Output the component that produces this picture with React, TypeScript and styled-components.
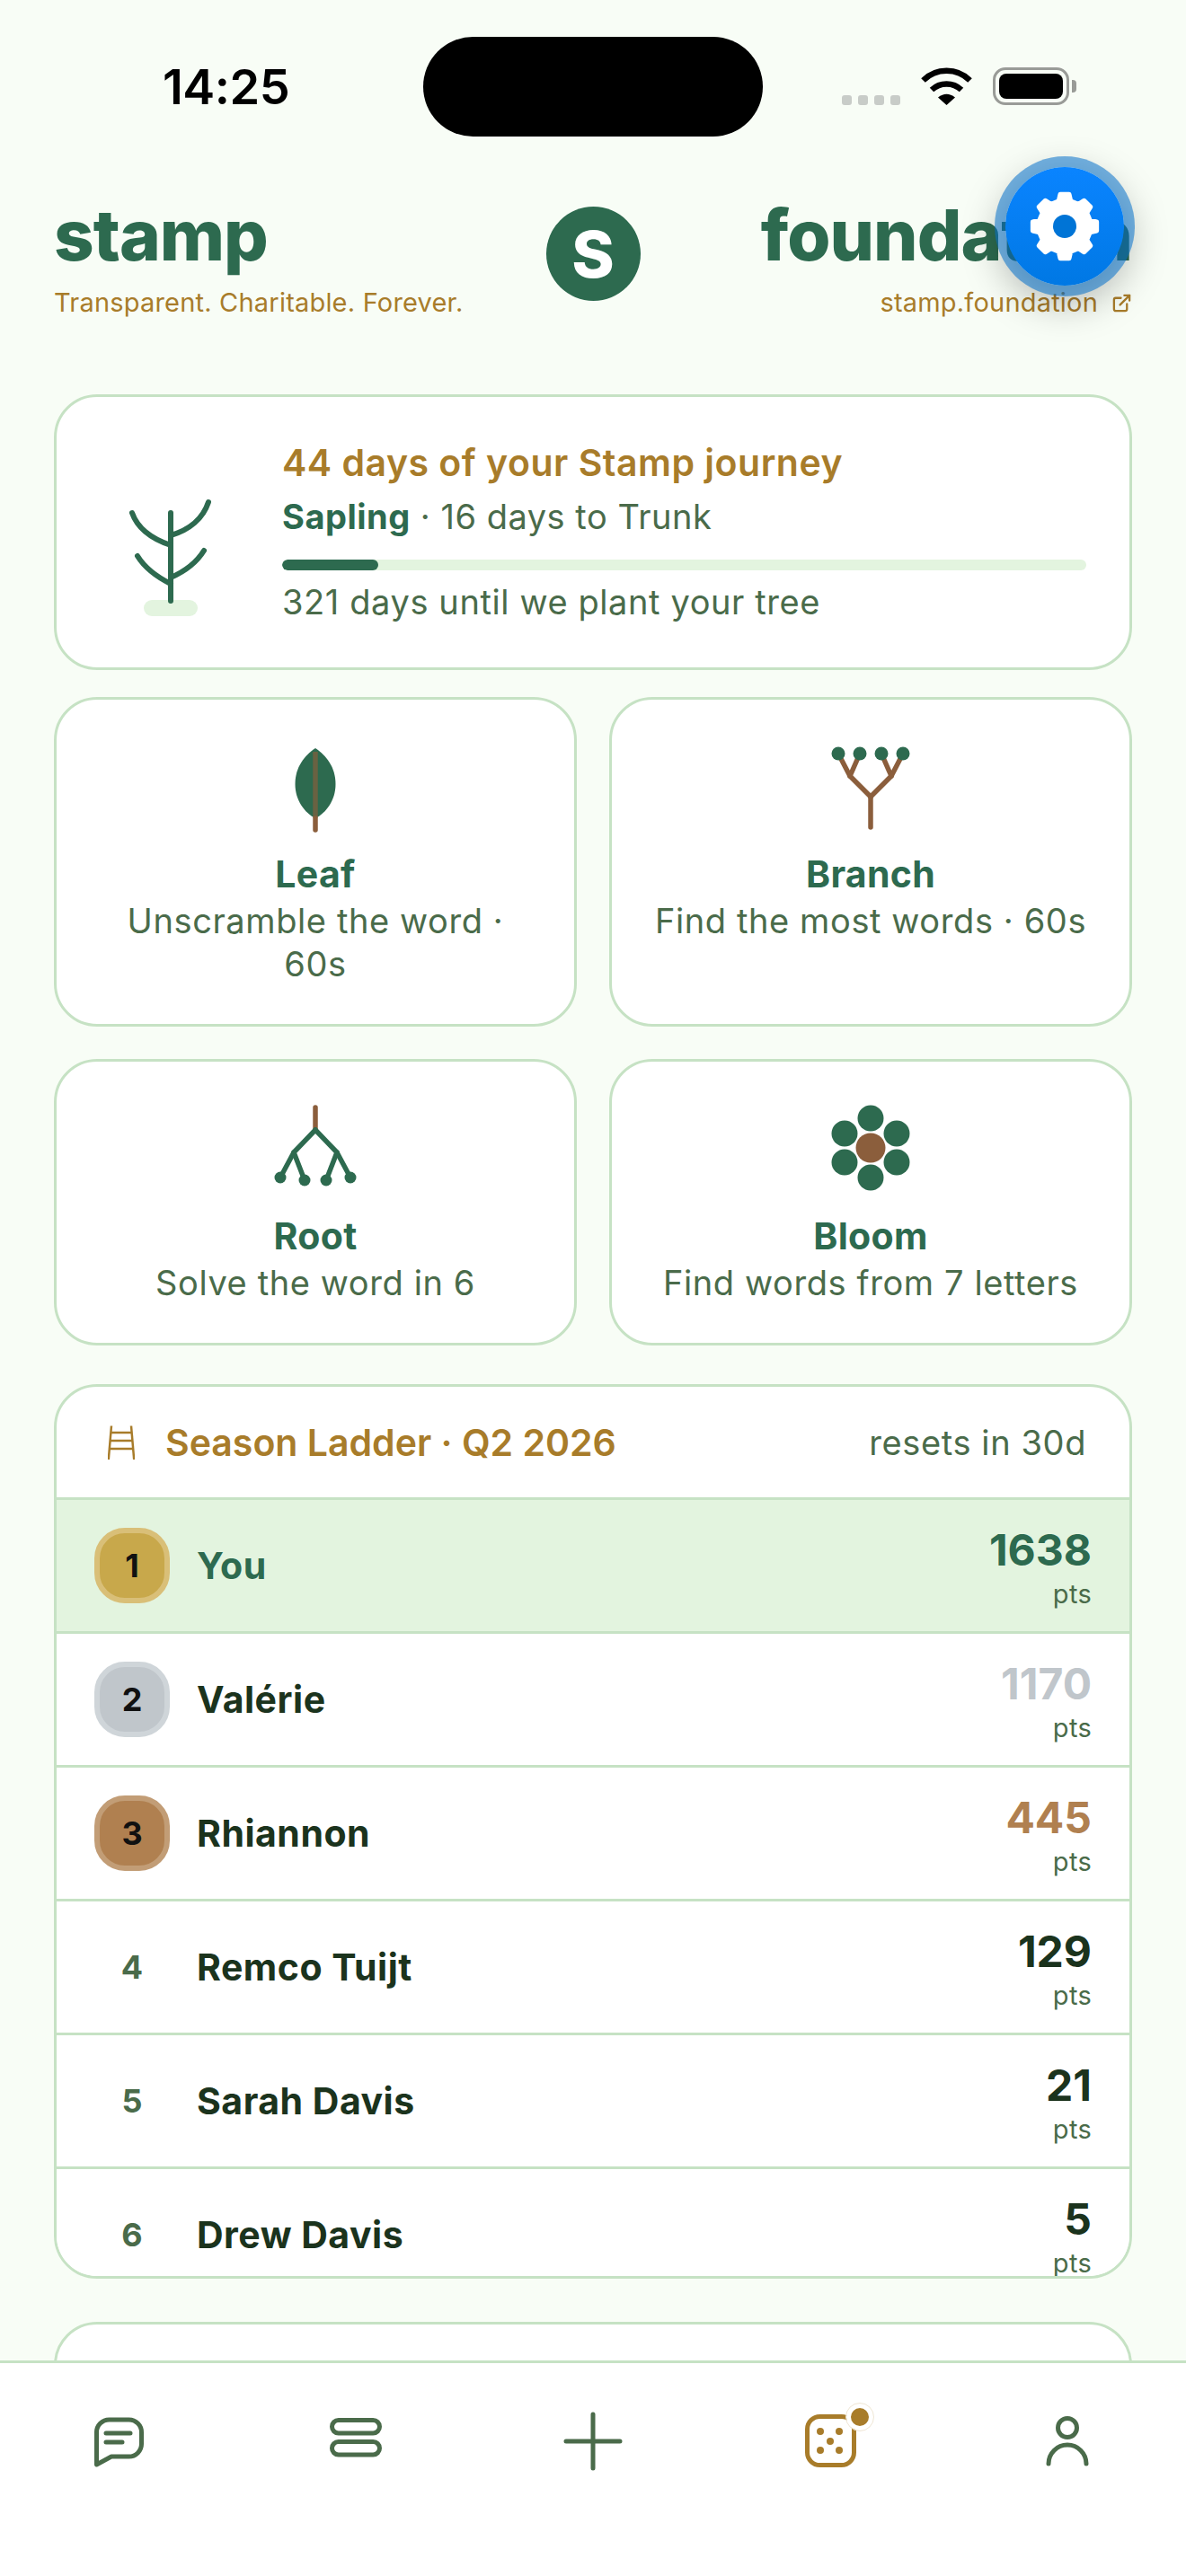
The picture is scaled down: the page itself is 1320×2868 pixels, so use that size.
import React from 'react';
import styled, {createGlobalStyle} from 'styled-components';
import {ExternalLink} from 'lucide-react';

const GREEN = '#2d6a4f';
const GOLD = '#a87c2a';
const MUTED = '#4a6b4a';
const INK = '#1b331d';
const LINE = '#c6e2c4';
const TINT = '#e3f4df';
const BROWN = '#8b5e3c';

type Rank = {
  rank: number;
  name: string;
  points: number;
};

const ranks: Rank[] = [
  {rank: 1, name: 'You', points: 1638},
  {rank: 2, name: 'Valérie', points: 1170},
  {rank: 3, name: 'Rhiannon', points: 445},
  {rank: 4, name: 'Remco Tuijt', points: 129},
  {rank: 5, name: 'Sarah Davis', points: 21},
  {rank: 6, name: 'Drew Davis', points: 5},
];

const medals: Record<number, {fill: string; ring: string}> = {
  1: {fill: '#c8a84b', ring: '#d9bf78'},
  2: {fill: '#c0c6cb', ring: '#cfd5d9'},
  3: {fill: '#b08050', ring: '#c29d76'},
};

const pointColors: Record<number, string> = {
  1: GREEN,
  2: '#c0c6cb',
  3: '#b08050',
};

function gearPoints() {
  const points: string[] = [];
  for (let i = 0; i < 8; i++) {
    const center = i * 45 - 90;
    [
      [29, -13.5],
      [36, -8],
      [36, 8],
      [29, 13.5],
    ].forEach(([radius, offset]) => {
      const angle = ((center + offset) * Math.PI) / 180;
      const x = 39 + radius * Math.cos(angle);
      const y = 39 + radius * Math.sin(angle);
      points.push(`${x.toFixed(2)},${y.toFixed(2)}`);
    });
  }
  return points.join(' ');
}

function TreeIcon() {
  return (
    <svg width="100" height="140" viewBox="140 550 100 140" fill="none">
      <rect x="159" y="665" width="60" height="18" rx="9" fill={TINT} />
      <g stroke={GREEN} strokeWidth="6" strokeLinecap="round">
        <path d="M189 568V666" />
        <path d="M146 568C152 585 168 597 189 604" />
        <path d="M231 556C225 574 210 587 189 593" />
        <path d="M152 616C160 629 173 639 189 647" />
        <path d="M226 610C218 623 205 633 189 640" />
      </g>
    </svg>
  );
}

function LeafIcon() {
  return (
    <GameSvg viewBox="0 0 96 96">
      <path
        d="M48 6C60 14 70.500 27 70.500 46C70.500 64 60 78 48 84C36 78 25.500 64 25.500 46C25.500 27 36 14 48 6Z"
        fill={GREEN}
      />
      <path d="M48 10V84" stroke={BROWN} strokeWidth="5.500" opacity="0.65" />
      <path d="M48 84V97" stroke={BROWN} strokeWidth="5.500" strokeLinecap="round" />
    </GameSvg>
  );
}

function BranchIcon() {
  return (
    <GameSvg viewBox="0 0 96 96">
      <g stroke={BROWN} strokeWidth="5.500" strokeLinecap="round" strokeLinejoin="round">
        <path d="M48 94V60" />
        <path d="M48 60L25 37L12 12" />
        <path d="M25 37L36 12" />
        <path d="M48 60L71 37L84 12" />
        <path d="M71 37L60 12" />
      </g>
      {[12, 36, 60, 84].map(x => (
        <circle key={x} cx={x} cy="12" r="7.500" fill={GREEN} />
      ))}
    </GameSvg>
  );
}

function RootIcon() {
  return (
    <GameSvg viewBox="0 0 96 96">
      <path d="M48 3V28" stroke={BROWN} strokeWidth="5.500" strokeLinecap="round" />
      <g stroke={GREEN} strokeWidth="5.500" strokeLinecap="round" strokeLinejoin="round">
        <path d="M48 28L24 53L9 81" />
        <path d="M24 53L36 84" />
        <path d="M48 28L72 53L87 81" />
        <path d="M72 53L60 84" />
      </g>
      <g fill={GREEN}>
        <circle cx="9" cy="81" r="6.500" />
        <circle cx="36" cy="84" r="6.500" />
        <circle cx="60" cy="84" r="6.500" />
        <circle cx="87" cy="81" r="6.500" />
      </g>
    </GameSvg>
  );
}

function BloomIcon() {
  return (
    <GameSvg viewBox="0 0 96 96">
      <g fill={GREEN}>
        <circle cx="48" cy="15" r="14.500" />
        <circle cx="19" cy="32" r="14.500" />
        <circle cx="77" cy="32" r="14.500" />
        <circle cx="19" cy="64" r="14.500" />
        <circle cx="77" cy="64" r="14.500" />
        <circle cx="48" cy="81" r="14.500" />
      </g>
      <circle cx="48" cy="48" r="16.500" fill={BROWN} />
    </GameSvg>
  );
}

function LadderIcon() {
  return (
    <svg width="30" height="38" viewBox="0 0 30 38" fill="none" stroke={GOLD} strokeWidth="2.500">
      <path d="M4 0.500L0.800 38" />
      <path d="M26 0.500L29.200 38" />
      <path d="M3.500 8H26.500M2.800 17H27.200M2 26H28" />
    </svg>
  );
}

const games = [
  {name: 'Leaf', info: 'Unscramble the word · 60s', icon: <LeafIcon />},
  {name: 'Branch', info: 'Find the most words · 60s', icon: <BranchIcon />},
  {name: 'Root', info: 'Solve the word in 6', icon: <RootIcon />},
  {name: 'Bloom', info: 'Find words from 7 letters', icon: <BloomIcon />},
];

function App() {
  return (
    <>
      <GlobalStyle />
      <Phone>
        <DynamicIsland />
        <StatusBar>
          <Clock>14:25</Clock>
          <StatusIcons>
            <SignalDots>
              <i />
              <i />
              <i />
              <i />
            </SignalDots>
            <svg width="57" height="42" viewBox="0 0 57 42" fill="none">
              <path d="M2.500 14.500A37 37 0 0 1 54.500 14.500" stroke="#000" strokeWidth="6.500" />
              <path d="M12 25A24 24 0 0 1 45 25" stroke="#000" strokeWidth="6.500" />
              <path d="M19 33.500Q28.500 26 38 33.500L28.500 42Z" fill="#000" />
            </svg>
            <Battery>
              <BatteryBody>
                <BatteryFill />
              </BatteryBody>
              <BatteryNub />
            </Battery>
          </StatusIcons>
        </StatusBar>

        <SettingsButton>
          <svg width="78" height="78" viewBox="0 0 78 78">
            <polygon
              points={gearPoints()}
              fill="#fff"
              stroke="#fff"
              strokeWidth="5"
              strokeLinejoin="round"
            />
            <circle cx="39" cy="39" r="13" fill="#0074d6" />
          </svg>
        </SettingsButton>

        <Header>
          <div>
            <Wordmark>stamp</Wordmark>
            <Tagline>Transparent. Charitable. Forever.</Tagline>
          </div>
          <Logo>S</Logo>
          <HeaderRight>
            <Wordmark>foundation</Wordmark>
            <Tagline>
              stamp.foundation
              <ExternalLink size={23} strokeWidth={2.4} />
            </Tagline>
          </HeaderRight>
        </Header>

        <Scroller>
          <JourneyCard>
            <JourneyIcon>
              <TreeIcon />
            </JourneyIcon>
            <JourneyBody>
              <JourneyTitle>44 days of your Stamp journey</JourneyTitle>
              <JourneyStage>
                <strong>Sapling</strong> · 16 days to Trunk
              </JourneyStage>
              <ProgressTrack>
                <ProgressFill style={{width: `${(107 / 893) * 100}%`}} />
              </ProgressTrack>
              <JourneyNote>321 days until we plant your tree</JourneyNote>
            </JourneyBody>
          </JourneyCard>

          <GameGrid>
            {games.map(game => (
              <GameCard key={game.name}>
                {game.icon}
                <GameName>{game.name}</GameName>
                <GameInfo>{game.info}</GameInfo>
              </GameCard>
            ))}
          </GameGrid>

          <LadderCard>
            <LadderHeader>
              <LadderTitle>
                <LadderIcon />
                <span>Season Ladder · Q2 2026</span>
              </LadderTitle>
              <LadderReset>resets in 30d</LadderReset>
            </LadderHeader>
            {ranks.map(row => (
              <LadderRow key={row.rank} $mine={row.rank === 1}>
                <Medal $fill={medals[row.rank]?.fill} $ring={medals[row.rank]?.ring}>
                  {row.rank}
                </Medal>
                <PlayerName $mine={row.rank === 1}>{row.name}</PlayerName>
                <Score>
                  <ScoreValue $color={pointColors[row.rank]}>{row.points}</ScoreValue>
                  <ScoreUnit>pts</ScoreUnit>
                </Score>
              </LadderRow>
            ))}
          </LadderCard>

          <NextCard />
        </Scroller>

        <TabBar>
          <Tab>
            <TabSvg viewBox="0 0 72 72">
              <path d="M11.500 62V26A14 14 0 0 1 25.500 12H47.500A14 14 0 0 1 61.500 26V39A14 14 0 0 1 47.500 53H28Z" />
              <path d="M22 27H49M22 37H40" />
            </TabSvg>
          </Tab>
          <Tab>
            <TabSvg viewBox="0 0 72 72">
              <rect x="9.500" y="12.500" width="53" height="14.500" rx="7.250" />
              <rect x="9.500" y="36.500" width="53" height="14.500" rx="7.250" />
            </TabSvg>
          </Tab>
          <Tab>
            <TabSvg viewBox="0 0 72 72">
              <path d="M36 6V66M6 36H66" />
            </TabSvg>
          </Tab>
          <Tab>
            <TabSvg viewBox="0 0 72 72" $color={GOLD}>
              <rect x="10.500" y="8.500" width="52" height="54" rx="14" />
              <g fill={GOLD} stroke="none">
                <circle cx="25" cy="25" r="4" />
                <circle cx="46" cy="25" r="4" />
                <circle cx="36" cy="36" r="4" />
                <circle cx="25" cy="46" r="4" />
                <circle cx="46" cy="46" r="4" />
              </g>
            </TabSvg>
            <TabDot />
          </Tab>
          <Tab>
            <TabSvg viewBox="0 0 72 72">
              <circle cx="36" cy="21" r="10.500" />
              <path d="M15 61A21 21 0 0 1 57 61" />
            </TabSvg>
          </Tab>
        </TabBar>
      </Phone>
    </>
  );
}

const GlobalStyle = createGlobalStyle`
  * {
    box-sizing: border-box;
  }

  body {
    margin: 0;
    background: #f8fdf6;
    font-family: Inter, "Liberation Sans", sans-serif;
  }
`;

const Phone = styled.div`
  position: relative;
  display: flex;
  flex-direction: column;
  width: 1320px;
  height: 2868px;
  overflow: hidden;
  background: #f8fdf6;
`;

const DynamicIsland = styled.div`
  position: absolute;
  top: 41px;
  left: 471px;
  width: 378px;
  height: 111px;
  border-radius: 56px;
  background: #000;
`;

const StatusBar = styled.div`
  flex: none;
  display: flex;
  justify-content: space-between;
  align-items: flex-start;
  height: 180px;
  padding: 0 122px 0 181px;
`;

const Clock = styled.div`
  margin-top: 70px;
  font-size: 54px;
  font-weight: 600;
  line-height: 54px;
  letter-spacing: -0.5px;
  color: #000;
`;

const StatusIcons = styled.div`
  display: flex;
  align-items: flex-end;
  margin-top: 75px;
`;

const SignalDots = styled.div`
  display: flex;
  gap: 7px;
  margin-right: 23px;

  i {
    width: 11px;
    height: 11px;
    border-radius: 3px;
    background: #c8ccc8;
  }
`;

const Battery = styled.div`
  display: flex;
  align-items: center;
  margin-left: 23px;
`;

const BatteryBody = styled.div`
  width: 85px;
  height: 42px;
  padding: 4px;
  border: 3px solid #999b97;
  border-radius: 14px;
`;

const BatteryFill = styled.div`
  height: 100%;
  border-radius: 8px;
  background: #000;
`;

const BatteryNub = styled.div`
  width: 5px;
  height: 14px;
  margin-left: 3px;
  border-radius: 0 4px 4px 0;
  background: #999b97;
`;

const SettingsButton = styled.button`
  position: absolute;
  z-index: 2;
  top: 186px;
  left: 1119px;
  display: flex;
  align-items: center;
  justify-content: center;
  width: 132px;
  height: 132px;
  padding: 0;
  border: 0;
  border-radius: 50%;
  background: linear-gradient(180deg, #0a84ff 0%, #0078e4 100%);
  box-shadow:
    0 0 0 12px rgba(6, 113, 204, 0.55),
    0 14px 44px 6px rgba(0, 0, 0, 0.28);
`;

const Header = styled.header`
  flex: none;
  display: grid;
  grid-template-columns: 1fr auto 1fr;
  align-items: start;
  height: 259px;
  padding: 40px 60px 0;
`;

const HeaderRight = styled.div`
  display: flex;
  flex-direction: column;
  align-items: flex-end;
`;

const Wordmark = styled.div`
  font-size: 78px;
  font-weight: 800;
  line-height: 84px;
  letter-spacing: -1px;
  color: ${GREEN};
`;

const Tagline = styled.div`
  display: flex;
  align-items: center;
  gap: 15px;
  margin-top: 15px;
  font-size: 29px;
  line-height: 36px;
  letter-spacing: 0.2px;
  color: ${GOLD};
`;

const Logo = styled.div`
  display: flex;
  align-items: center;
  justify-content: center;
  width: 105px;
  height: 105px;
  margin-top: 10px;
  border-radius: 50%;
  background: ${GREEN};
  font-size: 72px;
  font-weight: 800;
  color: #fff;
`;

const Scroller = styled.main`
  flex: 1;
  min-height: 0;
  display: flex;
  flex-direction: column;
  padding: 0 60px;
  overflow: hidden;
`;

const JourneyCard = styled.section`
  flex: none;
  display: flex;
  align-items: center;
  height: 307px;
  padding: 0 48px 0 60px;
  border: 3px solid ${LINE};
  border-radius: 48px;
  background: #fff;
`;

const JourneyIcon = styled.div`
  flex: none;
  display: flex;
  width: 191px;
  padding: 60px 0 0 18px;
`;

const JourneyBody = styled.div`
  flex: 1;
  display: flex;
  flex-direction: column;
`;

const JourneyTitle = styled.div`
  font-size: 41px;
  font-weight: 600;
  line-height: 48px;
  letter-spacing: 0.5px;
  color: ${GOLD};
`;

const JourneyStage = styled.div`
  margin-top: 12px;
  font-size: 38px;
  line-height: 48px;
  letter-spacing: 0.5px;
  color: ${MUTED};

  strong {
    font-weight: 700;
    color: ${GREEN};
  }
`;

const ProgressTrack = styled.div`
  height: 12px;
  margin-top: 24px;
  border-radius: 6px;
  background: ${TINT};
  overflow: hidden;
`;

const ProgressFill = styled.div`
  height: 100%;
  border-radius: 6px;
  background: ${GREEN};
`;

const JourneyNote = styled.div`
  margin-top: 11px;
  font-size: 38px;
  line-height: 48px;
  letter-spacing: 0.6px;
  color: ${MUTED};
`;

const GameGrid = styled.div`
  flex: none;
  display: grid;
  grid-template-columns: repeat(2, 1fr);
  gap: 36px;
  margin-top: 30px;
`;

const GameCard = styled.button`
  display: flex;
  flex-direction: column;
  align-items: center;
  padding: 48px 42px 43px;
  border: 3px solid ${LINE};
  border-radius: 48px;
  background: #fff;
  font-family: inherit;
  text-align: center;
`;

const GameSvg = styled.svg.attrs({fill: 'none'})`
  flex: none;
  width: 96px;
  height: 96px;
  overflow: visible;
`;

const GameName = styled.div`
  margin-top: 26px;
  font-size: 41px;
  font-weight: 700;
  line-height: 48px;
  letter-spacing: 0.3px;
  color: ${GREEN};
`;

const GameInfo = styled.div`
  margin-top: 4px;
  font-size: 38px;
  line-height: 48px;
  letter-spacing: 0.6px;
  color: ${MUTED};
`;

const LadderCard = styled.section`
  flex: none;
  display: flex;
  flex-direction: column;
  height: 996px;
  margin-top: 43px;
  border: 3px solid ${LINE};
  border-radius: 48px;
  background: #fff;
  overflow: hidden;
`;

const LadderHeader = styled.div`
  flex: none;
  display: flex;
  justify-content: space-between;
  align-items: center;
  height: 126px;
  padding: 0 48px 0 57px;
  border-bottom: 3px solid ${LINE};
`;

const LadderTitle = styled.div`
  display: flex;
  align-items: center;
  gap: 34px;
  font-size: 41px;
  font-weight: 600;
  color: ${GOLD};
`;

const LadderReset = styled.div`
  font-size: 38px;
  letter-spacing: 0.6px;
  color: ${MUTED};
`;

const LadderRow = styled.div<{$mine: boolean}>`
  flex: none;
  display: flex;
  align-items: center;
  height: 149px;
  padding: 0 42px;
  border-bottom: 3px solid ${LINE};
  background: ${p => (p.$mine ? TINT : '#fff')};
`;

const Medal = styled.div<{$fill?: string; $ring?: string}>`
  flex: none;
  display: flex;
  align-items: center;
  justify-content: center;
  width: 84px;
  height: 84px;
  margin-right: 30px;
  border: ${p => (p.$fill ? `6px solid ${p.$ring}` : 'none')};
  border-radius: 34px;
  background: ${p => p.$fill || 'transparent'};
  font-size: 36px;
  font-weight: 700;
  color: ${p => (p.$fill ? '#111' : MUTED)};
`;

const PlayerName = styled.div<{$mine: boolean}>`
  flex: 1;
  font-size: 41px;
  font-weight: 700;
  letter-spacing: 0.5px;
  color: ${p => (p.$mine ? GREEN : INK)};
`;

const Score = styled.div`
  display: flex;
  flex-direction: column;
  align-items: flex-end;
  padding-top: 3px;
`;

const ScoreValue = styled.div<{$color?: string}>`
  font-size: 48px;
  font-weight: 700;
  line-height: 54px;
  color: ${p => p.$color || INK};
`;

const ScoreUnit = styled.div`
  margin-top: 5px;
  font-size: 29px;
  line-height: 33px;
  letter-spacing: 0.3px;
  color: ${MUTED};
`;

const NextCard = styled.section`
  flex: none;
  height: 200px;
  margin-top: 48px;
  border: 3px solid ${LINE};
  border-radius: 48px;
  background: #fff;
`;

const TabBar = styled.nav`
  flex: none;
  display: grid;
  grid-template-columns: repeat(5, 1fr);
  align-items: start;
  height: 240px;
  padding-top: 51px;
  border-top: 3px solid ${LINE};
  background: #fff;
`;

const Tab = styled.div`
  position: relative;
  display: flex;
  justify-content: center;
`;

const TabSvg = styled.svg.attrs({fill: 'none'})<{$color?: string}>`
  width: 72px;
  height: 72px;
  stroke: ${p => p.$color || MUTED};
  stroke-width: 5;
  stroke-linecap: round;
  stroke-linejoin: round;
`;

const TabDot = styled.span`
  position: absolute;
  top: -6px;
  left: 50%;
  width: 30px;
  height: 30px;
  margin-left: 18px;
  border: 5px solid #fff;
  border-radius: 50%;
  background: ${GOLD};
  outline: 1px solid #efe6d4;
`;

export default App;
